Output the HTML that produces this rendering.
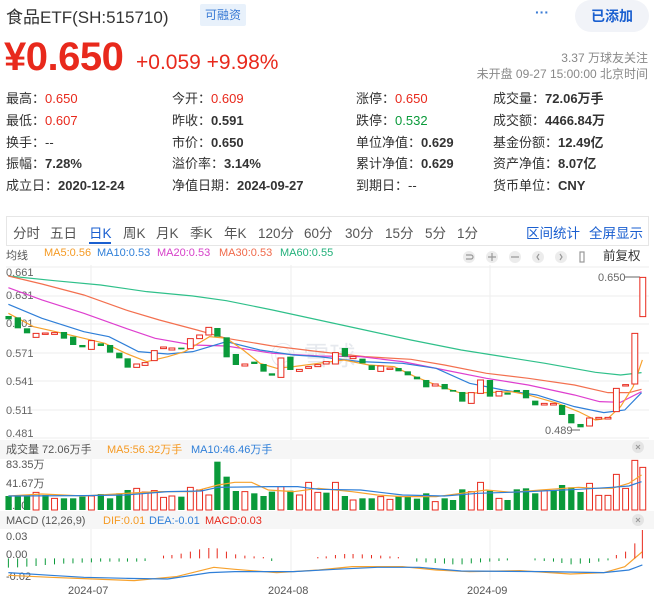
<!DOCTYPE html>
<html><head><meta charset="utf-8"><style>
*{margin:0;padding:0;box-sizing:border-box}
body{width:654px;height:599px;background:#fff;font-family:"Liberation Sans","Noto Sans CJK SC",sans-serif;color:#333;position:relative;overflow:hidden}
.a{position:absolute;white-space:nowrap}
.r{color:#e8291c}.g{color:#0a9a3a}.b{font-weight:bold}
.row span{font-size:13px}
</style></head><body>
<div class="a" style="left:6px;top:3px;font-size:17px;color:#333">食品ETF(SH:515710)</div>
<div class="a" style="left:200px;top:4px;width:46px;height:22px;background:#e8f1fb;color:#3a7bd5;font-size:12px;line-height:22px;text-align:center;border-radius:2px">可融资</div>
<div class="a" style="left:535px;top:4px;font-size:14px;color:#3a7bd5;font-weight:bold">···</div>
<div class="a" style="left:575px;top:0;width:74px;height:32px;background:#f1f3f8;border-radius:16px;color:#1a5fd0;font-size:14px;font-weight:bold;line-height:32px;text-align:center">已添加</div>
<div class="a r b" style="left:4px;top:35px;font-size:40px;line-height:44px;letter-spacing:-0.5px">¥0.650</div>
<div class="a r" style="left:136px;top:51px;font-size:21px">+0.059 +9.98%</div>
<div class="a" style="right:6px;top:50px;font-size:12px;color:#888;text-align:right;line-height:16px">3.37 万球友关注<br>未开盘 09-27 15:00:00 北京时间</div>

<div class="a" style="left:6px;top:88px;font-size:13px;line-height:21.8px">最高：<span class="r">0.650</span><br>最低：<span class="r">0.607</span><br>换手：--<br>振幅：<b>7.28%</b><br>成立日：<b>2020-12-24</b></div>
<div class="a" style="left:172px;top:88px;font-size:13px;line-height:21.8px">今开：<span class="r">0.609</span><br>昨收：<b>0.591</b><br>市价：<b>0.650</b><br>溢价率：<b>3.14%</b><br>净值日期：<b>2024-09-27</b></div>
<div class="a" style="left:356px;top:88px;font-size:13px;line-height:21.8px">涨停：<span class="r">0.650</span><br>跌停：<span class="g">0.532</span><br>单位净值：<b>0.629</b><br>累计净值：<b>0.629</b><br>到期日：--</div>
<div class="a" style="left:493px;top:88px;font-size:13px;line-height:21.8px">成交量：<b>72.06万手</b><br>成交额：<b>4466.84万</b><br>基金份额：<b>12.49亿</b><br>资产净值：<b>8.07亿</b><br>货币单位：<b>CNY</b></div>

<div class="a" style="left:6px;top:216px;width:643px;height:30px;border:1px solid #e6e6e6"></div>
<div class="a" style="top:222px;font-size:13.5px;color:#555;left:0;width:654px">
<span class="a" style="left:13px">分时</span><span class="a" style="left:50px">五日</span><span class="a" style="left:89px;color:#1a5fd0">日K</span><span class="a" style="left:123px">周K</span><span class="a" style="left:156px">月K</span><span class="a" style="left:190px">季K</span><span class="a" style="left:224px">年K</span><span class="a" style="left:258px">120分</span><span class="a" style="left:304px">60分</span><span class="a" style="left:345px">30分</span><span class="a" style="left:385px">15分</span><span class="a" style="left:425px">5分</span><span class="a" style="left:457px">1分</span><span class="a" style="left:526px;color:#1a5fd0">区间统计</span><span class="a" style="left:589px;color:#1a5fd0">全屏显示</span></div>
<div class="a" style="left:89px;top:242px;width:22px;height:2px;background:#1a5fd0"></div>

<div class="a" style="top:247px;font-size:11px;left:0;width:654px">
<span class="a" style="left:6px;color:#555">均线</span><span class="a" style="left:44px;color:#f59a23">MA5:0.56</span><span class="a" style="left:97px;color:#2f7fd8">MA10:0.53</span><span class="a" style="left:157px;color:#d63fc9">MA20:0.53</span><span class="a" style="left:219px;color:#f0694a">MA30:0.53</span><span class="a" style="left:280px;color:#22b07a">MA60:0.55</span><span class="a" style="left:603px;font-size:12.5px;top:-2px;color:#333">前复权</span></div>
<svg class="a" style="left:0;top:0" width="654" height="599">
<g fill="#ececec"><circle cx="469" cy="257" r="6"/><circle cx="492" cy="257" r="6"/><circle cx="515" cy="257" r="6"/><circle cx="538" cy="257" r="6"/><circle cx="561" cy="257" r="6"/></g>
<g stroke="#999" stroke-width="1.2" fill="none"><path d="M466 255h5a2 2 0 010 4h-5M488 257h8M492 253v8M511 257h8M539 254l-2 3 2 3M560 254l2 3-2 3"/><rect x="580" y="252" width="4" height="10"/></g>
<g stroke="#eee" stroke-width="1"><line x1="6" y1="267" x2="649" y2="267"/><line x1="6" y1="296" x2="649" y2="296"/><line x1="6" y1="324" x2="649" y2="324"/><line x1="6" y1="353" x2="649" y2="353"/><line x1="6" y1="381" x2="649" y2="381"/><line x1="6" y1="410" x2="649" y2="410"/><line x1="6" y1="438" x2="649" y2="438"/><line x1="91" y1="265" x2="91" y2="580"/><line x1="291" y1="265" x2="291" y2="580"/><line x1="490" y1="265" x2="490" y2="580"/></g>
<text x="270" y="365" font-size="26" fill="#e6e9ee" font-family="Liberation Sans,Noto Sans CJK SC,sans-serif">◎ 雪球</text>
<g font-size="11" fill="#666" font-family="Liberation Sans,sans-serif"><text x="6" y="276">0.661</text><text x="6" y="299">0.631</text><text x="6" y="327">0.601</text><text x="6" y="357">0.571</text><text x="6" y="385">0.541</text><text x="6" y="414">0.511</text><text x="6" y="437">0.481</text>
<text x="598" y="281">0.650</text><text x="545" y="434">0.489</text></g>
<g stroke="#666" stroke-width="1"><line x1="625" y1="277" x2="640" y2="277"/><line x1="572" y1="430" x2="580" y2="430"/></g>
<g transform="translate(0,210) scale(0.4193,0.3333)">
<g fill="none" stroke-width="1.2" vector-effect="non-scaling-stroke">
<polyline vector-effect="non-scaling-stroke" stroke="#2fc08a" points="20,198 130,212 240,225 350,245 460,258 540,272 650,300 760,330 870,360 980,390 1100,420 1200,440 1300,460 1420,487 1480,495 1530,488"/>
<polyline vector-effect="non-scaling-stroke" stroke="#f3704f" points="20,198 100,222 200,255 300,300 380,330 470,360 540,385 650,408 760,425 870,440 980,448 1060,465 1160,490 1260,505 1370,525 1450,548 1500,548 1530,538"/>
<polyline vector-effect="non-scaling-stroke" stroke="#de3fcf" points="20,233 100,270 200,310 300,355 370,385 460,405 540,408 650,430 760,438 860,440 960,455 1060,480 1160,505 1260,525 1370,555 1430,575 1480,577 1530,545"/>
<polyline vector-effect="non-scaling-stroke" stroke="#2f7fd8" points="20,283 100,325 200,365 260,380 330,425 400,432 460,425 540,395 620,420 700,435 760,440 860,455 960,460 1040,475 1120,520 1200,540 1280,555 1370,590 1440,608 1490,600 1530,548"/>
<polyline vector-effect="non-scaling-stroke" stroke="#f7a22d" points="20,310 80,350 150,370 200,385 250,400 300,430 350,455 400,440 440,425 500,380 540,385 580,420 620,460 660,475 700,470 760,460 820,450 880,465 940,470 990,500 1040,525 1100,550 1160,548 1220,545 1260,555 1330,580 1380,605 1420,630 1450,625 1480,590 1510,530 1532,450"/>
</g>
<g fill="#0a9a3a">
<rect x="13" y="318" width="15" height="10"/><rect x="35" y="322" width="15" height="33"/><rect x="57" y="355" width="15" height="15"/><rect x="145" y="366" width="15" height="20"/><rect x="167" y="380" width="15" height="25"/><rect x="189" y="405" width="15" height="7"/><rect x="233" y="400" width="15" height="8"/><rect x="255" y="405" width="15" height="23"/><rect x="277" y="428" width="15" height="17"/><rect x="297" y="445" width="15" height="28"/><rect x="425" y="413" width="15" height="5"/><rect x="511" y="354" width="15" height="26"/><rect x="533" y="382" width="15" height="60"/><rect x="555" y="432" width="15" height="33"/><rect x="599" y="455" width="15" height="7"/><rect x="621" y="462" width="15" height="23"/><rect x="641" y="490" width="15" height="7"/><rect x="685" y="440" width="15" height="40"/><rect x="815" y="414" width="15" height="26"/><rect x="857" y="446" width="15" height="14"/><rect x="879" y="466" width="15" height="14"/><rect x="943" y="474" width="15" height="10"/><rect x="965" y="484" width="15" height="12"/><rect x="987" y="500" width="15" height="8"/><rect x="1009" y="510" width="15" height="22"/><rect x="1053" y="522" width="15" height="16"/><rect x="1073" y="540" width="15" height="5"/><rect x="1095" y="546" width="15" height="29"/><rect x="1161" y="510" width="15" height="50"/><rect x="1203" y="548" width="15" height="6"/><rect x="1225" y="540" width="15" height="6"/><rect x="1247" y="540" width="15" height="25"/><rect x="1269" y="572" width="15" height="14"/><rect x="1333" y="585" width="15" height="30"/><rect x="1355" y="612" width="15" height="28"/><rect x="1377" y="642" width="15" height="10"/>
</g>
<g fill="#fff" stroke="#e8291c" stroke-width="1" vector-effect="non-scaling-stroke">
<rect vector-effect="non-scaling-stroke" x="79" y="370" width="14" height="12"/><rect vector-effect="non-scaling-stroke" x="101" y="369" width="14" height="4"/><rect vector-effect="non-scaling-stroke" x="123" y="368" width="14" height="5"/><rect vector-effect="non-scaling-stroke" x="211" y="392" width="14" height="26"/><rect vector-effect="non-scaling-stroke" x="319" y="462" width="14" height="10"/><rect vector-effect="non-scaling-stroke" x="339" y="458" width="14" height="8"/><rect vector-effect="non-scaling-stroke" x="361" y="422" width="14" height="30"/><rect vector-effect="non-scaling-stroke" x="383" y="411" width="14" height="5"/><rect vector-effect="non-scaling-stroke" x="403" y="414" width="14" height="6"/><rect vector-effect="non-scaling-stroke" x="447" y="386" width="14" height="30"/><rect vector-effect="non-scaling-stroke" x="469" y="375" width="14" height="11"/><rect vector-effect="non-scaling-stroke" x="491" y="352" width="14" height="23"/><rect vector-effect="non-scaling-stroke" x="577" y="462" width="14" height="6"/><rect vector-effect="non-scaling-stroke" x="663" y="444" width="14" height="58"/><rect vector-effect="non-scaling-stroke" x="707" y="478" width="14" height="6"/><rect vector-effect="non-scaling-stroke" x="729" y="470" width="14" height="5"/><rect vector-effect="non-scaling-stroke" x="751" y="464" width="14" height="6"/><rect vector-effect="non-scaling-stroke" x="771" y="455" width="14" height="7"/><rect vector-effect="non-scaling-stroke" x="793" y="428" width="14" height="34"/><rect vector-effect="non-scaling-stroke" x="835" y="440" width="14" height="6"/><rect vector-effect="non-scaling-stroke" x="901" y="468" width="14" height="16"/><rect vector-effect="non-scaling-stroke" x="923" y="474" width="14" height="4"/><rect vector-effect="non-scaling-stroke" x="1031" y="522" width="14" height="6"/><rect vector-effect="non-scaling-stroke" x="1117" y="548" width="14" height="32"/><rect vector-effect="non-scaling-stroke" x="1139" y="510" width="14" height="40"/><rect vector-effect="non-scaling-stroke" x="1183" y="544" width="14" height="14"/><rect vector-effect="non-scaling-stroke" x="1291" y="580" width="14" height="5"/><rect vector-effect="non-scaling-stroke" x="1313" y="580" width="14" height="5"/><rect vector-effect="non-scaling-stroke" x="1399" y="624" width="14" height="24"/><rect vector-effect="non-scaling-stroke" x="1421" y="622" width="14" height="5"/><rect vector-effect="non-scaling-stroke" x="1443" y="622" width="14" height="5"/><rect vector-effect="non-scaling-stroke" x="1463" y="535" width="14" height="70"/><rect vector-effect="non-scaling-stroke" x="1485" y="524" width="14" height="4"/><rect vector-effect="non-scaling-stroke" x="1507" y="370" width="14" height="152"/><rect vector-effect="non-scaling-stroke" x="1526" y="202" width="14" height="118"/>
</g>
</g>

<rect x="0" y="440" width="654" height="19" fill="#f6f6f6"/>
<rect x="0" y="511" width="654" height="18" fill="#f6f6f6"/>
<g font-size="11" font-family="Liberation Sans,Noto Sans CJK SC,sans-serif">
<text x="6" y="453" fill="#555">成交量 72.06万手</text><text x="107" y="453" fill="#f59a23">MA5:56.32万手</text><text x="191" y="453" fill="#2f7fd8">MA10:46.46万手</text>
<text x="6" y="524" fill="#555">MACD (12,26,9)</text><text x="103" y="524" fill="#f59a23">DIF:0.01</text><text x="149" y="524" fill="#2f7fd8">DEA:-0.01</text><text x="205" y="524" fill="#e8291c">MACD:0.03</text>
<text x="6" y="468" fill="#555">83.35万</text><text x="6" y="487" fill="#555">41.67万</text><text x="6" y="509" fill="#555">0.00</text>
<text x="6" y="540" fill="#555">0.03</text><text x="6" y="558" fill="#555">0.00</text><text x="6" y="580" fill="#555">-0.02</text>
<text x="68" y="594" fill="#555">2024-07</text><text x="268" y="594" fill="#555">2024-08</text><text x="467" y="594" fill="#555">2024-09</text>
</g>
<g fill="#e4e4e4"><circle cx="638" cy="447" r="6"/><circle cx="638" cy="520" r="6"/></g>
<g stroke="#999" stroke-width="1"><path d="M636 445l4 4M640 445l-4 4M636 518l4 4M640 518l-4 4"/></g>
<g transform="translate(0,430) scale(0.4193,0.3333)">
<g fill="#0a9a3a">
<rect x="13" y="198" width="15" height="42"/><rect x="35" y="195" width="15" height="45"/><rect x="57" y="195" width="15" height="45"/><rect x="101" y="195" width="15" height="45"/><rect x="145" y="205" width="15" height="35"/><rect x="167" y="205" width="15" height="35"/><rect x="189" y="200" width="15" height="40"/><rect x="233" y="192" width="15" height="48"/><rect x="255" y="205" width="15" height="35"/><rect x="277" y="190" width="15" height="50"/><rect x="297" y="180" width="15" height="60"/><rect x="425" y="200" width="15" height="40"/><rect x="511" y="95" width="15" height="145"/><rect x="533" y="140" width="15" height="100"/><rect x="555" y="183" width="15" height="57"/><rect x="599" y="190" width="15" height="50"/><rect x="621" y="198" width="15" height="42"/><rect x="641" y="185" width="15" height="55"/><rect x="685" y="182" width="15" height="58"/><rect x="771" y="188" width="15" height="52"/><rect x="815" y="198" width="15" height="42"/><rect x="857" y="205" width="15" height="35"/><rect x="879" y="205" width="15" height="35"/><rect x="943" y="198" width="15" height="42"/><rect x="965" y="198" width="15" height="42"/><rect x="987" y="206" width="15" height="34"/><rect x="1009" y="190" width="15" height="50"/><rect x="1053" y="205" width="15" height="35"/><rect x="1073" y="210" width="15" height="30"/><rect x="1095" y="178" width="15" height="62"/><rect x="1161" y="182" width="15" height="58"/><rect x="1203" y="210" width="15" height="30"/><rect x="1225" y="178" width="15" height="62"/><rect x="1247" y="175" width="15" height="65"/><rect x="1269" y="190" width="15" height="50"/><rect x="1313" y="180" width="15" height="60"/><rect x="1333" y="165" width="15" height="75"/><rect x="1355" y="172" width="15" height="68"/><rect x="1377" y="186" width="15" height="54"/>
</g>
<g fill="#fff" stroke="#e8291c">
<rect vector-effect="non-scaling-stroke" x="79" y="187" width="14" height="53"/><rect vector-effect="non-scaling-stroke" x="123" y="205" width="14" height="35"/><rect vector-effect="non-scaling-stroke" x="211" y="198" width="14" height="42"/><rect vector-effect="non-scaling-stroke" x="319" y="175" width="14" height="65"/><rect vector-effect="non-scaling-stroke" x="339" y="186" width="14" height="54"/><rect vector-effect="non-scaling-stroke" x="361" y="182" width="14" height="58"/><rect vector-effect="non-scaling-stroke" x="383" y="202" width="14" height="38"/><rect vector-effect="non-scaling-stroke" x="403" y="198" width="14" height="42"/><rect vector-effect="non-scaling-stroke" x="447" y="172" width="14" height="68"/><rect vector-effect="non-scaling-stroke" x="469" y="180" width="14" height="60"/><rect vector-effect="non-scaling-stroke" x="491" y="195" width="14" height="45"/><rect vector-effect="non-scaling-stroke" x="577" y="185" width="14" height="55"/><rect vector-effect="non-scaling-stroke" x="663" y="170" width="14" height="70"/><rect vector-effect="non-scaling-stroke" x="707" y="195" width="14" height="45"/><rect vector-effect="non-scaling-stroke" x="729" y="157" width="14" height="83"/><rect vector-effect="non-scaling-stroke" x="751" y="187" width="14" height="53"/><rect vector-effect="non-scaling-stroke" x="793" y="157" width="14" height="83"/><rect vector-effect="non-scaling-stroke" x="835" y="210" width="14" height="30"/><rect vector-effect="non-scaling-stroke" x="901" y="200" width="14" height="40"/><rect vector-effect="non-scaling-stroke" x="923" y="208" width="14" height="32"/><rect vector-effect="non-scaling-stroke" x="1031" y="215" width="14" height="25"/><rect vector-effect="non-scaling-stroke" x="1117" y="185" width="14" height="55"/><rect vector-effect="non-scaling-stroke" x="1139" y="157" width="14" height="83"/><rect vector-effect="non-scaling-stroke" x="1183" y="205" width="14" height="35"/><rect vector-effect="non-scaling-stroke" x="1291" y="180" width="14" height="60"/><rect vector-effect="non-scaling-stroke" x="1399" y="160" width="14" height="80"/><rect vector-effect="non-scaling-stroke" x="1421" y="196" width="14" height="44"/><rect vector-effect="non-scaling-stroke" x="1443" y="196" width="14" height="44"/><rect vector-effect="non-scaling-stroke" x="1463" y="133" width="14" height="107"/><rect vector-effect="non-scaling-stroke" x="1485" y="175" width="14" height="65"/><rect vector-effect="non-scaling-stroke" x="1507" y="91" width="14" height="149"/><rect vector-effect="non-scaling-stroke" x="1526" y="112" width="14" height="128"/>
</g>
<g fill="none" stroke-width="1.2">
<polyline vector-effect="non-scaling-stroke" stroke="#f7a22d" points="20,198 100,192 200,198 300,190 380,185 460,185 520,165 560,157 600,157 640,180 700,185 760,175 840,185 900,195 960,200 1040,200 1100,190 1160,180 1220,187 1290,180 1380,172 1420,175 1460,175 1500,160 1530,135"/>
<polyline vector-effect="non-scaling-stroke" stroke="#2f7fd8" points="20,198 200,197 300,195 400,185 480,183 520,172 640,170 710,170 760,178 860,180 960,195 1060,198 1140,190 1260,185 1380,178 1460,172 1500,168 1530,155"/>
<polyline vector-effect="non-scaling-stroke" stroke="#f7a22d" points="20,436 120,442 200,446 320,452 420,440 510,412 560,418 660,428 760,420 840,410 960,410 1040,420 1120,425 1240,422 1360,432 1440,428 1490,410 1532,365"/>
<polyline vector-effect="non-scaling-stroke" stroke="#2f7fd8" points="20,428 120,436 200,442 300,445 400,447 500,428 560,425 700,425 800,418 900,412 1000,412 1100,423 1300,425 1440,428 1500,420 1532,405"/>
</g>
<g stroke="#0a9a3a" stroke-width="1">
<path vector-effect="non-scaling-stroke" d="M20 385v28M42 385v27M64 385v25M86 385v23M108 385v20M130 385v18M152 385v16M174 385v15M196 385v13M218 385v12M240 385v10M262 385v10M284 385v10M304 385v10M326 385v10M346 385v8M648 385v8M994 385v10M1016 385v12M1038 385v14M1060 385v16M1080 385v18M1102 385v18M1124 385v15M1146 385v12M1168 385v10M1190 385v8M1210 385v6M1276 385v6M1298 385v8M1320 385v10M1340 385v14M1362 385v18M1384 385v16M1406 385v14M1428 385v10M1450 385v6"/>
</g>
<g stroke="#e8291c" stroke-width="1">
<path vector-effect="non-scaling-stroke" d="M390 385v-8M410 385v-10M432 385v-14M454 385v-20M476 385v-27M498 385v-31M518 385v-30M540 385v-20M562 385v-12M584 385v-8M606 385v-6M628 385v-4M758 385v-4M778 385v-6M800 385v-10M822 385v-13M842 385v-13M864 385v-12M886 385v-10M908 385v-8M930 385v-6M950 385v-4M1470 385v-10M1492 385v-20M1514 385v-45M1532 385v-85"/>
</g>
</g>
</svg>
</body></html>
